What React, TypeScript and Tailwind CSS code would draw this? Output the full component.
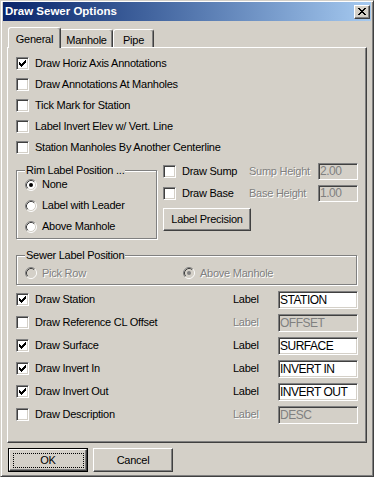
import type { ReactNode } from 'react';

const FONT = "font-['Liberation_Sans',Arial,sans-serif]";
const ETCHED = 'text-[#808080] [text-shadow:1px_1px_0_#fff]';

function Check({ checked }: { checked?: boolean }) {
  // classic 7px tick, one column = 3 pixels
  const cols: [number, number][] = [
    [2, 4], [3, 5], [4, 6], [5, 5], [6, 4], [7, 3], [8, 2],
  ];
  return (
    <span className="flex w-[13px] h-[13px] shrink-0 bg-white border border-t-[#808080] border-l-[#808080] border-r-white border-b-white shadow-[inset_1px_1px_0_#404040,inset_-1px_-1px_0_#d4d0c8]">
      {checked && (
        <svg width="11" height="11" viewBox="0 0 11 11" shapeRendering="crispEdges">
          {cols.map(([x, y]) => (
            <rect key={x} x={x} y={y} width="1" height="3" fill="#000" />
          ))}
        </svg>
      )}
    </span>
  );
}

function Radio({ checked, disabled }: { checked?: boolean; disabled?: boolean }) {
  return (
    <svg width="12" height="12" viewBox="0 0 12 12" className="shrink-0">
      <circle cx="6" cy="6" r="5" fill={disabled ? '#d4d0c8' : '#fff'} />
      <path d="M2.11 9.89 A5.5 5.5 0 0 1 9.89 2.11" fill="none" stroke="#808080" />
      <path d="M9.89 2.11 A5.5 5.5 0 0 1 2.11 9.89" fill="none" stroke="#fff" />
      <path d="M2.82 9.18 A4.5 4.5 0 0 1 9.18 2.82" fill="none" stroke="#404040" />
      <path d="M9.18 2.82 A4.5 4.5 0 0 1 2.82 9.18" fill="none" stroke="#d4d0c8" />
      {checked && <circle cx="6" cy="6" r="2" fill={disabled ? '#808080' : '#000'} />}
    </svg>
  );
}

function Edit({ value, disabled, w, h = 'h-[18px]' }: { value: string; disabled?: boolean; w: string; h?: string }) {
  return (
    <div
      className={`${w} ${h} shrink-0 flex items-center pl-[1px] text-[12px] tracking-[-0.5px] border border-t-[#808080] border-l-[#808080] border-r-white border-b-white shadow-[inset_1px_1px_0_#404040,inset_-1px_-1px_0_#d4d0c8] ${
        disabled ? 'bg-[#d4d0c8] text-[#808080]' : 'bg-white text-black'
      }`}
    >
      {value}
    </div>
  );
}

function Raised({ children, className }: { children: ReactNode; className: string }) {
  return (
    <div
      className={`flex items-center justify-center bg-[#d4d0c8] border border-t-white border-l-white border-r-[#404040] border-b-[#404040] shadow-[inset_-1px_-1px_0_#808080] ${className}`}
    >
      {children}
    </div>
  );
}

function CheckRow({ label, checked, h = 'h-[21px]' }: { label: string; checked?: boolean; h?: string }) {
  return (
    <div className={`flex items-center gap-[6px] ${h}`}>
      <Check checked={checked} />
      <span>{label}</span>
    </div>
  );
}

function GroupBox({ title, className, children }: { title: string; className: string; children: ReactNode }) {
  return (
    <div className={`relative border border-[#808080] shadow-[inset_1px_1px_0_#fff,1px_1px_0_#fff] ${className}`}>
      <span className="absolute -top-[8px] left-[8px] px-[1px] bg-[#d4d0c8] leading-[14px]">{title}</span>
      {children}
    </div>
  );
}

const labelRows = [
  { text: 'Draw Station', on: true, value: 'STATION' },
  { text: 'Draw Reference CL Offset', on: false, value: 'OFFSET' },
  { text: 'Draw Surface', on: true, value: 'SURFACE' },
  { text: 'Draw Invert In', on: true, value: 'INVERT IN' },
  { text: 'Draw Invert Out', on: true, value: 'INVERT OUT' },
  { text: 'Draw Description', on: false, value: 'DESC' },
];

export default function App() {
  return (
    <div className={`w-[376px] h-[480px] bg-white ${FONT} text-[11px] tracking-[-0.25px] text-black`}>
      <div className="w-[374px] h-[477px] flex flex-col bg-[#d4d0c8] border border-t-[#d4d0c8] border-l-[#d4d0c8] border-r-[#404040] border-b-[#404040] shadow-[inset_1px_1px_0_#fff,inset_-1px_-1px_0_#808080] pt-[1px] px-[2px]">
        {/* title bar */}
        <div className="h-[19px] flex items-center justify-between pl-[2px] pr-[1px] bg-gradient-to-r from-[#0a246a] to-[#a6caf0]">
          <span className="text-white font-bold text-[11.5px] tracking-normal">Draw Sewer Options</span>
          <Raised className="w-[16px] h-[14px]">
            <svg width="8" height="7" viewBox="0 0 8 7" shapeRendering="crispEdges">
              <path d="M0 0h2v1h1v1h2v-1h1v-1h2v1h-1v1h-1v1h-1v1h1v1h1v1h1v1h-2v-1h-1v-1h-2v1h-1v1h-2v-1h1v-1h1v-1h1v-1h-1v-1h-1v-1h-1z" fill="#000" />
            </svg>
          </Raised>
        </div>

        {/* tabs */}
        <div className="mt-[6px] ml-[5px] h-[20px] flex items-end">
          <div className="relative z-10 -mb-px w-[53px] h-[21px] flex justify-center pt-[3px] bg-[#d4d0c8] border-l border-t border-r border-l-white border-t-white border-r-[#404040] rounded-t-[3px] shadow-[inset_-1px_0_0_#808080]">
            General
          </div>
          <div className="w-[52px] h-[18px] flex justify-center pt-[2px] border-t border-r border-t-white border-r-[#404040] rounded-tr-[3px] shadow-[inset_-1px_0_0_#808080]">
            Manhole
          </div>
          <div className="w-[41px] h-[18px] flex justify-center pt-[2px] border-l border-t border-r border-l-white border-t-white border-r-[#404040] rounded-t-[3px] shadow-[inset_-1px_0_0_#808080]">
            Pipe
          </div>
        </div>

        {/* tab page */}
        <div className="ml-[4px] w-[360px] h-[396px] flex flex-col pt-[5px] pl-[8px] border border-t-white border-l-white border-r-[#404040] border-b-[#404040] shadow-[inset_-1px_-1px_0_#808080]">
          <CheckRow label="Draw Horiz Axis Annotations" checked />
          <CheckRow label="Draw Annotations At Manholes" />
          <CheckRow label="Tick Mark for Station" />
          <CheckRow label="Label Invert Elev w/ Vert. Line" />
          <CheckRow label="Station Manholes By Another Centerline" />

          <div className="mt-[3px] flex gap-[6px]">
            <GroupBox title="Rim Label Position ..." className="mt-[9px] w-[141px] h-[69px] pt-[3px] pl-[8px]">
              {[
                ['None', true],
                ['Label with Leader', false],
                ['Above Manhole', false],
              ].map(([t, on]) => (
                <div key={t as string} className="h-[21px] flex items-center gap-[5px]">
                  <Radio checked={on as boolean} />
                  <span>{t}</span>
                </div>
              ))}
            </GroupBox>

            <div className="w-[195px] flex flex-col">
              <div className="h-[20px] flex items-center">
                <div className="w-[86px]">
                  <CheckRow label="Draw Sump" h="h-[20px]" />
                </div>
                <span className={`w-[69px] ${ETCHED}`}>Sump Height</span>
                <Edit value="2.00" disabled w="w-[40px]" h="h-[17px]" />
              </div>
              <div className="mt-[2px] h-[20px] flex items-center">
                <div className="w-[86px]">
                  <CheckRow label="Draw Base" h="h-[20px]" />
                </div>
                <span className={`w-[69px] ${ETCHED}`}>Base Height</span>
                <Edit value="1.00" disabled w="w-[40px]" h="h-[17px]" />
              </div>
              <Raised className="mt-[5px] w-[88px] h-[23px]">Label Precision</Raised>
            </div>
          </div>

          <GroupBox title="Sewer Label Position" className="mt-[16px] w-[341px] h-[30px] pt-[7px] pl-[8px]">
            <div className="h-[20px] flex items-center">
              <div className={`w-[158px] flex items-center gap-[5px] ${ETCHED}`}>
                <Radio disabled />
                <span>Pick Row</span>
              </div>
              <div className={`flex items-center gap-[5px] ${ETCHED}`}>
                <Radio checked disabled />
                <span>Above Manhole</span>
              </div>
            </div>
          </GroupBox>

          <div className="mt-[3px] w-[342px] flex flex-col">
            {labelRows.map((r) => (
              <div key={r.text} className="h-[23px] flex items-center">
                <div className="flex-1">
                  <CheckRow label={r.text} checked={r.on} h="h-[23px]" />
                </div>
                <span className={`w-[45px] ${r.on ? '' : ETCHED}`}>Label</span>
                <Edit value={r.value} disabled={!r.on} w="w-[80px]" />
              </div>
            ))}
          </div>
        </div>

        {/* buttons */}
        <div className="mt-[5px] ml-[5px] flex gap-[5px]">
          <div className="w-[80px] h-[24px] border border-black flex">
            <Raised className="flex-1">
              <div className="w-[71px] h-[15px] flex items-center justify-center border border-dotted border-black">
                OK
              </div>
            </Raised>
          </div>
          <Raised className="w-[80px] h-[24px]">Cancel</Raised>
        </div>
      </div>
    </div>
  );
}
